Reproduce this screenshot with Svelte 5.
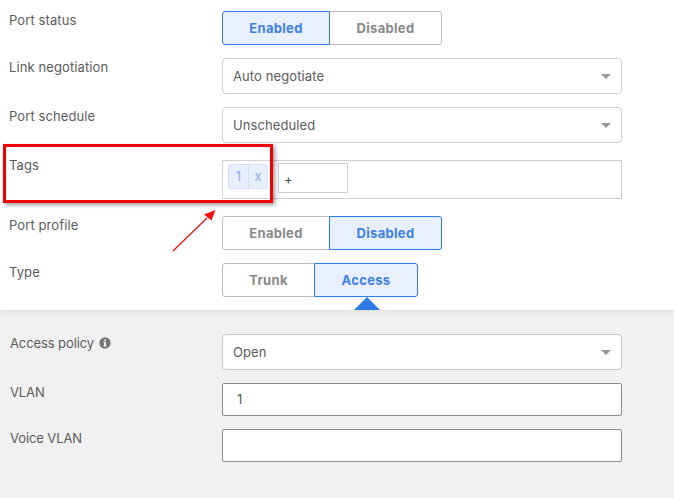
<script>
  const top = [
    { label: 'Port status', kind: 'seg', opts: ['Enabled', 'Disabled'], active: 0, widths: [108, 113] },
    { label: 'Link negotiation', kind: 'select', value: 'Auto negotiate' },
    { label: 'Port schedule', kind: 'select', value: 'Unscheduled' },
    { label: 'Tags', kind: 'tags' },
    { label: 'Port profile', kind: 'seg', opts: ['Enabled', 'Disabled'], active: 1, widths: [108, 113] },
    { label: 'Type', kind: 'seg', opts: ['Trunk', 'Access'], active: 1, widths: [93, 104] }
  ];
</script>

{#snippet seg(row)}
  <div class="seg">
    {#each row.opts as o, i}
      <div class="opt" class:on={i === row.active} style="width:{row.widths[i]}px">{o}</div>
    {/each}
  </div>
{/snippet}

<div class="page">
  <section class="white">
    {#each top as row}
      <div class="row {row.kind}-row">
        <div class="label">{row.label}</div>
        {#if row.kind === 'seg'}
          {@render seg(row)}
        {:else if row.kind === 'select'}
          <div class="select"><span>{row.value}</span><i class="caret"></i></div>
        {:else}
          <div class="tags">
            <div class="tag"><span class="tv">1</span><span class="tx">x</span></div>
            <div class="add">+</div>
          </div>
        {/if}
      </div>
    {/each}
    <div class="pointer"></div>
  </section>

  <section class="grey">
    <div class="row select-row">
      <div class="label">Access policy
        <svg class="info" viewBox="0 0 12 12" width="12" height="12" aria-hidden="true">
          <circle cx="6" cy="6" r="5.7" fill="#757575" />
          <rect x="5" y="5" width="2" height="4.2" fill="#f1f1f1" />
          <rect x="4.3" y="8.4" width="3.4" height="1" fill="#f1f1f1" />
          <rect x="4.3" y="5" width="2" height="0.9" fill="#f1f1f1" />
          <circle cx="6" cy="3.3" r="1.1" fill="#f1f1f1" />
        </svg>
      </div>
      <div class="select"><span>Open</span><i class="caret"></i></div>
    </div>
    <div class="row input-row">
      <div class="label">VLAN</div>
      <div class="input">1</div>
    </div>
    <div class="row input-row">
      <div class="label">Voice VLAN</div>
      <div class="input"></div>
    </div>
  </section>

  <div class="callout"></div>
  <svg class="arrow" viewBox="0 0 60 60" width="60" height="60" aria-hidden="true">
    <line x1="13" y1="51" x2="47" y2="18" stroke="#ee1111" stroke-width="1.3" />
    <polygon points="55.5,10 44,14.5 51.5,20.5" fill="#ee1111" />
  </svg>
</div>

<style>
  :global(body) { margin: 0; }
  .page {
    position: relative;
    width: 674px;
    height: 498px;
    overflow: hidden;
    background: #f1f1f1;
    font-family: Inter, "Liberation Sans", sans-serif;
    font-size: 13px;
    letter-spacing: 0.1px;
    color: #5c5c5c;
  }
  .white {
    position: relative;
    box-sizing: border-box;
    height: 310px;
    padding: 11px 0 0;
    background: #fff;
    box-shadow: 0 1px 3px rgba(0, 0, 0, 0.1);
  }
  .grey { padding-top: 24px; }
  .row { display: flex; align-items: flex-start; padding-left: 9px; margin-bottom: 13px; }
  .grey .row { padding-left: 10px; }
  .tags-row { margin-top: 17px; margin-bottom: 17px; }
  .tags-row .label { margin-top: -4px; }
  .label { width: 213px; flex: none; line-height: 18px; }
  .grey .label { width: 212px; letter-spacing: -0.1px; }
  .seg { display: flex; height: 34px; }
  .opt {
    box-sizing: border-box;
    border: 1px solid #bdbdbd;
    background: #fff;
    color: #8a8a8a;
    font-weight: 700;
    letter-spacing: 0.3px;
    text-align: center;
    line-height: 32px;
  }
  .opt:first-child { border-radius: 3px 0 0 3px; }
  .opt:last-child { border-radius: 0 3px 3px 0; margin-left: -1px; }
  .opt.on {
    position: relative;
    z-index: 1;
    background: #e8f0fd;
    border-color: #2f7be5;
    color: #3f80e8;
  }
  .select {
    box-sizing: border-box;
    width: 400px;
    height: 36px;
    border: 1px solid #cfcfcf;
    border-radius: 4px;
    background: #fff;
    padding: 0 10px;
    line-height: 35px;
    display: flex;
    justify-content: space-between;
    align-items: center;
  }
  .caret {
    width: 0;
    height: 0;
    border-left: 5px solid transparent;
    border-right: 5px solid transparent;
    border-top: 5px solid #969696;
  }
  .tags {
    box-sizing: border-box;
    width: 400px;
    height: 39px;
    border: 1px solid #cfcfcf;
    background: #fff;
    padding: 2px 5px;
    display: flex;
    gap: 10px;
  }
  .tag {
    display: flex;
    height: 25px;
    margin-top: 1px;
    width: 40px;
    box-sizing: border-box;
    border: 1px solid #d5e1f8;
    border-radius: 3px;
    background: #e7eefc;
    color: #8ea9ec;
    line-height: 23px;
    text-align: center;
  }
  .tv { width: 19px; border-right: 1px solid #d5e1f8; }
  .tx { flex: 1; }
  .add {
    box-sizing: border-box;
    width: 70px;
    height: 30px;
    border: 1px solid #cfcfcf;
    background: #fff;
    padding-left: 5px;
    line-height: 30px;
    color: #444;
  }
  .input {
    box-sizing: border-box;
    width: 400px;
    height: 33px;
    border: 1px solid #8c8c8c;
    border-radius: 2px;
    background: #fff;
    padding-left: 14px;
    line-height: 31px;
  }
  .grey .select { border-color: #c8c8c8; }
  .info { vertical-align: -1px; margin-left: 1px; }
  .pointer {
    position: absolute;
    left: 354px;
    top: 297px;
    width: 0;
    height: 0;
    border-left: 13px solid transparent;
    border-right: 13px solid transparent;
    border-bottom: 13px solid #2f7be5;
  }
  .callout {
    position: absolute;
    left: 3px;
    top: 144px;
    width: 264px;
    height: 53px;
    border: 3px solid #f00000;
    box-shadow: 2px 2px 4px rgba(0, 0, 0, 0.4);
  }
  .arrow { position: absolute; left: 160px; top: 200px; }
</style>
